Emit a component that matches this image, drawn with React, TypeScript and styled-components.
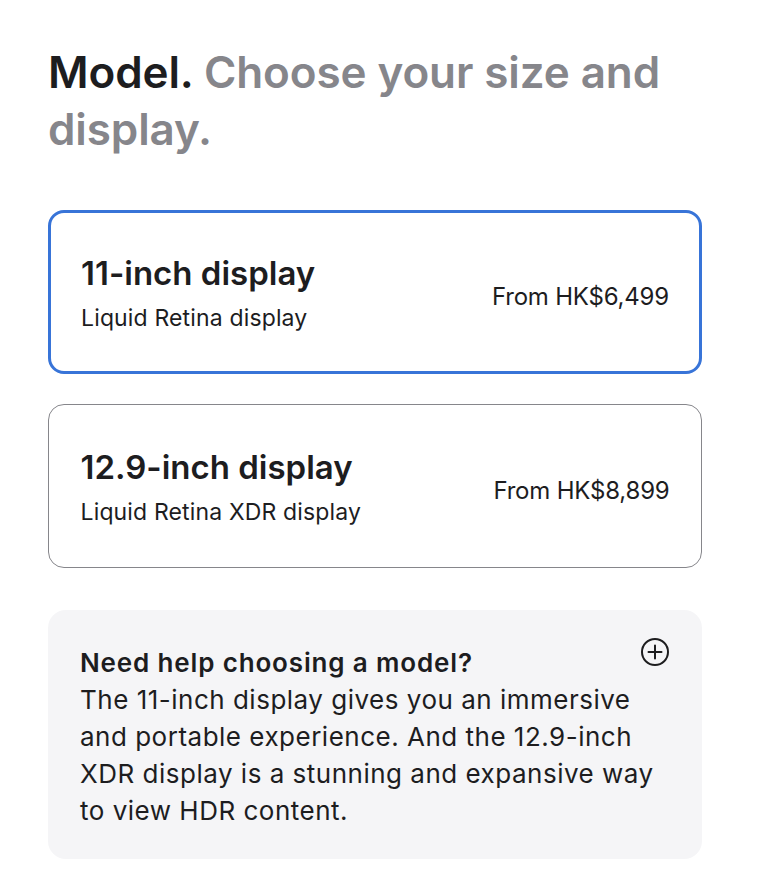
import React from "react";
import styled, { createGlobalStyle } from "styled-components";

const GlobalStyle = createGlobalStyle`
  body {
    margin: 0;
    background: #ffffff;
    font-family: Inter, "Noto Sans", sans-serif;
    color: #1d1d1f;
  }
`;

const Page = styled.div`
  padding: 44px 58px 0 48px;
  display: flex;
  flex-direction: column;
`;

const Heading = styled.h2`
  margin: 0 0 52px;
  font-size: 44px;
  line-height: 57px;
  font-weight: 600;
  letter-spacing: -0.1px;
  color: #86868b;
`;

const Strong = styled.span`
  color: #1d1d1f;
`;

const Options = styled.div`
  display: flex;
  flex-direction: column;
  gap: 30px;
`;

const Option = styled.button<{ $selected?: boolean }>`
  all: unset;
  box-sizing: border-box;
  height: 164px;
  display: flex;
  align-items: center;
  justify-content: space-between;
  padding: ${(p) => (p.$selected ? "0 30px" : "0 31.5px")};
  border-radius: 16px;
  border: ${(p) => (p.$selected ? "3px solid #3874d8" : "1.5px solid #86868b")};
  cursor: pointer;
`;

const OptionText = styled.div`
  display: flex;
  flex-direction: column;
  gap: 11px;
`;

const OptionTitle = styled.div`
  font-size: 33px;
  line-height: 40px;
  font-weight: 600;
  color: #1d1d1f;
`;

const OptionSub = styled.div`
  font-size: 23px;
  line-height: 28px;
  letter-spacing: 0.15px;
  color: #1d1d1f;
`;

const Price = styled.div`
  margin-top: 9px;
  font-size: 24px;
  line-height: 28px;
  letter-spacing: -0.2px;
  color: #1d1d1f;
`;

const Help = styled.div`
  margin-top: 42px;
  background: #f5f5f7;
  border-radius: 18px;
  padding: 34px 32px 30px 32px;
  display: flex;
  justify-content: space-between;
  align-items: flex-start;
`;

const HelpText = styled.div`
  display: flex;
  flex-direction: column;
  max-width: 580px;
`;

const HelpTitle = styled.div`
  font-size: 26px;
  line-height: 37px;
  font-weight: 600;
  letter-spacing: 0.85px;
`;

const HelpBody = styled.p`
  margin: 0;
  font-size: 26px;
  line-height: 37px;
  letter-spacing: 0.5px;
`;

const IconWrap = styled.div`
  margin-top: -7px;
  margin-left: -30px;
  flex-shrink: 0;
  display: flex;
`;

const PlusIcon = () => (
  <svg width="30" height="30" viewBox="0 0 30 30" fill="none" stroke="#1d1d1f" strokeWidth="2">
    <circle cx="15" cy="15" r="13" />
    <path d="M15 8.5v13M8.5 15h13" strokeLinecap="round" />
  </svg>
);

export default function App() {
  return (
    <>
      <GlobalStyle />
      <Page>
        <Heading>
          <Strong>Model.</Strong> Choose your size and display.
        </Heading>
        <Options>
          <Option $selected>
            <OptionText>
              <OptionTitle>11-inch display</OptionTitle>
              <OptionSub>Liquid Retina display</OptionSub>
            </OptionText>
            <Price>From HK$6,499</Price>
          </Option>
          <Option>
            <OptionText>
              <OptionTitle>12.9-inch display</OptionTitle>
              <OptionSub>Liquid Retina XDR display</OptionSub>
            </OptionText>
            <Price>From HK$8,899</Price>
          </Option>
        </Options>
        <Help>
          <HelpText>
            <HelpTitle>Need help choosing a model?</HelpTitle>
            <HelpBody>
              The 11-inch display gives you an immersive and portable experience. And the 12.9-inch XDR display is a
              stunning and expansive way to view HDR content.
            </HelpBody>
          </HelpText>
          <IconWrap>
            <PlusIcon />
          </IconWrap>
        </Help>
      </Page>
    </>
  );
}
